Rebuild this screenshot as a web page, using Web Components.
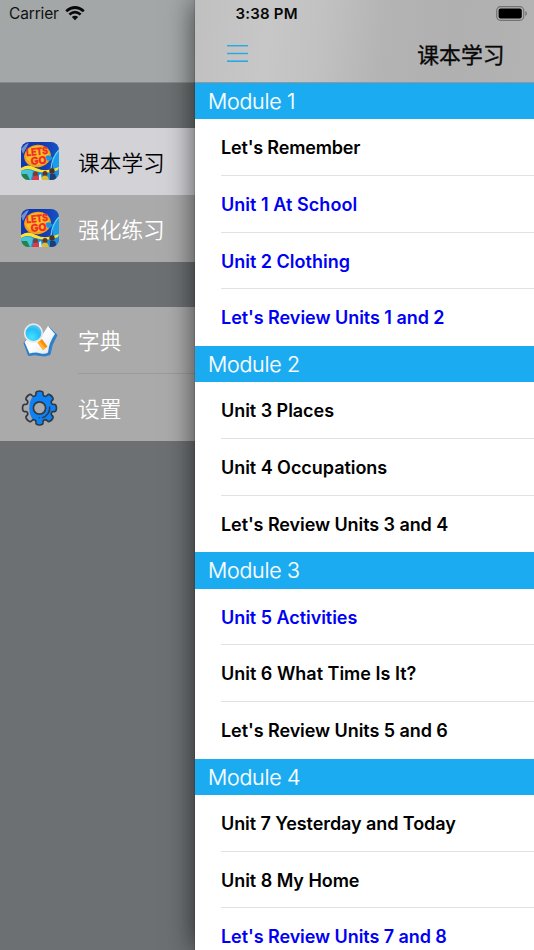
<!DOCTYPE html>
<html lang="zh-CN">
<head>
<meta charset="utf-8">
<title>课本学习</title>
<style>
    body {
        margin: 0;
        height: 950px;
        overflow: hidden;
        font-family: Inter, "Noto Sans CJK SC", sans-serif;
    }
</style>
</head>
<body>
<study-app>
    <side-menu slot="menu">
        <menu-group>
            <menu-item icon="book" selected>课本学习</menu-item>
            <menu-item icon="book">强化练习</menu-item>
        </menu-group>
        <menu-group>
            <menu-item icon="dictionary">字典</menu-item>
            <menu-item icon="settings">设置</menu-item>
        </menu-group>
    </side-menu>
    <nav-header slot="page" time="3:38 PM">课本学习</nav-header>
    <lesson-section slot="page" title="Module 1">
        <lesson-row style="letter-spacing: -0.17px">Let's Remember</lesson-row>
        <lesson-row done style="letter-spacing: 0.05px">Unit 1 At School</lesson-row>
        <lesson-row done style="letter-spacing: 0">Unit 2 Clothing</lesson-row>
        <lesson-row done>Let's Review Units 1 and 2</lesson-row>
    </lesson-section>
    <lesson-section slot="page" title="Module 2">
        <lesson-row>Unit 3 Places</lesson-row>
        <lesson-row>Unit 4 Occupations</lesson-row>
        <lesson-row style="letter-spacing: -0.08px">Let's Review Units 3 and 4</lesson-row>
    </lesson-section>
    <lesson-section slot="page" title="Module 3">
        <lesson-row done>Unit 5 Activities</lesson-row>
        <lesson-row style="letter-spacing: 0">Unit 6 What Time Is It?</lesson-row>
        <lesson-row style="letter-spacing: -0.07px">Let's Review Units 5 and 6</lesson-row>
    </lesson-section>
    <lesson-section slot="page" title="Module 4">
        <lesson-row style="letter-spacing: -0.08px">Unit 7 Yesterday and Today</lesson-row>
        <lesson-row>Unit 8 My Home</lesson-row>
        <lesson-row done style="letter-spacing: -0.07px">Let's Review Units 7 and 8</lesson-row>
    </lesson-section>
</study-app>

<script>
const ICONS = {
    book: `
        <svg width="38" height="38" viewBox="0 0 38 38">
            <defs>
                <clipPath id="r"><rect width="38" height="38" rx="8"/></clipPath>
                <linearGradient id="sky" x2="1"><stop offset=".5" stop-color="#1236ae"/><stop offset="1" stop-color="#1454c8"/></linearGradient>
            </defs>
            <g clip-path="url(#r)">
                <rect width="38" height="38" fill="url(#sky)"/>
                <path d="M0 7L5 2 8 1 2 12z" fill="#6d91ce"/>
                <path d="M38 8Q30 15 32 29H38z" fill="#189eea"/>
                <path d="M38 8Q31 15 30 27" fill="none" stroke="#6ed0e5" stroke-width="1.3"/>
                <ellipse cx="16.5" cy="14" rx="13.4" ry="11.2" fill="#f0a21d" transform="rotate(-8 17 14)"/>
                <ellipse cx="16.5" cy="13.5" rx="11.5" ry="9.5" fill="#fbbd2a"/>
                <path d="M25 14Q29 12 32 16L29 19 24 18z" fill="#1793df"/>
                <path d="M0 26Q7 22 14 26Q24 31 38 26V38H0z" fill="#178edf"/>
                <path d="M0 26Q7 21 15 26Q25 31 38 25L37 28Q27 33 14 29Q6 25 0 29z" fill="#ffe22e"/>
                <path d="M0 29Q6 26 12 29L10 38H0z" fill="#48c3db"/>
                <path d="M1 32H6L9 38H1z" fill="#278145"/>
                <circle cx="14.5" cy="32" r="2.5" fill="#853b29"/>
                <circle cx="24" cy="31.5" r="2.5" fill="#64341f"/>
                <circle cx="31" cy="29" r="2.7" fill="#4d3021"/>
                <path d="M12 35Q15 32 18 35V38H11z" fill="#df3944"/>
                <path d="M21 35Q24 32 27 35L28 38H21z" fill="#e0bd30"/>
                <path d="M29 32H34L36 38H29z" fill="#233b73"/>
                <path d="M18 33L20 32 21 38H18z" fill="#d8eae8"/>
                <g transform="rotate(-6 17 14)" fill="#f02c25" stroke="#f02c25" stroke-width=".3" font-family="Inter, sans-serif" font-weight="800" text-anchor="middle">
                    <text x="16.5" y="13" font-size="10" textLength="22" lengthAdjust="spacingAndGlyphs">LETS</text>
                    <text x="17" y="22.3" font-size="10.5" textLength="16" lengthAdjust="spacingAndGlyphs">GO</text>
                </g>
            </g>
        </svg>`,
    dictionary: `
        <svg width="38" height="38" viewBox="0 0 38 38">
            <defs>
                <radialGradient id="lens" cx=".4" cy=".75" r=".8"><stop stop-color="#42e4ff"/><stop offset=".6" stop-color="#26bcf6"/><stop offset="1" stop-color="#69cef5"/></radialGradient>
                <linearGradient id="page" x2="1" y2="1"><stop stop-color="#d8dddf"/><stop offset=".45" stop-color="#fff"/><stop offset="1" stop-color="#dce5ed"/></linearGradient>
            </defs>
            <path d="M3 22L7.5 34.5Q15 33 19 34.5Q24 36 29 33.5Q30 24 36 14L28 6 21 17 8 15z" fill="#2b7fcb" stroke="#2b7fcb" stroke-width="1" stroke-linejoin="round"/>
            <path d="M3.5 21L8.5 32.5Q15 30.5 19 32.3Q24 33.7 27 31.5Q28 21 34 13L27 5 20 16 9 15z" fill="url(#page)"/>
            <path d="M16.5 21.5L21 18 26.5 25.5 22 29z" fill="#fb8c0c"/>
            <path d="M16.5 21.5L18.5 20 24.5 27 22 29z" fill="#ffb52c"/>
            <circle cx="12.5" cy="12" r="8.8" fill="url(#lens)" stroke="#e8e7e6" stroke-width="1.7"/>
        </svg>`,
    settings: `
        <svg width="38" height="38" viewBox="-19 -19 38 38">
            <g transform="translate(-.5 0)">
                <path id="gear" fill="#aaa"/>
                <path id="fill" fill="#0c82f4"/>
                <path id="rim" fill="none" stroke="#303943" stroke-width="1.7" stroke-linejoin="round"/>
                <circle r="6.1" fill="#aaa" stroke="#303943" stroke-width="1.7"/>
                <path d="M10.2 -1A10.2 10.2 0 0 1 3 9.6" fill="none" stroke="#303943" stroke-width="1.5" stroke-linecap="round"/>
                <circle cx="-.2" cy="9.7" r=".8" fill="#303943"/>
            </g>
        </svg>`
};

// Eight rounded teeth around a hub
function gearPath() {
    let d = '';
    for (let i = 0; i < 8; i++) {
        const at = (r, deg) => {
            const a = (i * 45 + deg - 90) * Math.PI / 180;
            return `${(r * Math.cos(a)).toFixed(2)} ${(r * Math.sin(a)).toFixed(2)}`;
        };
        d += `${i ? 'L' : 'M'}${at(13, -19)}Q${at(13.3, -15)} ${at(14.6, -14)}Q${at(17.1, -13)} ${at(16.8, -5)}Q${at(17.3, 0)} ${at(16.8, 5)}Q${at(17.1, 13)} ${at(14.6, 14)}Q${at(13.3, 15)} ${at(13, 19)}`;
    }
    return d + 'Z';
}

customElements.define('study-app', class extends HTMLElement {
    constructor() {
        super();
        this.attachShadow({ mode: 'open' }).innerHTML = `
            <style>
                :host {
                    display: grid;
                    grid-template-columns: 195px 339px;
                    width: 534px;
                    height: 950px;
                    overflow: hidden;
                    background: #6c7072;
                }
                main {
                    height: 950px;
                    background: #fff;
                    box-shadow: 0 0 27px rgba(0, 0, 0, .65), 0 0 1px rgba(0, 0, 0, .5);
                    z-index: 1;
                }
            </style>
            <slot name="menu"></slot>
            <main><slot name="page"></slot></main>
        `;
    }
});

customElements.define('side-menu', class extends HTMLElement {
    constructor() {
        super();
        this.attachShadow({ mode: 'open' }).innerHTML = `
            <style>
                :host { display: block; min-width: 0; }
                header {
                    box-sizing: border-box;
                    height: 83px;
                    padding: 5px 0 0 9px;
                    display: flex;
                    align-items: flex-start;
                    gap: 6px;
                    background: #a3a7a7;
                    border-bottom: 1px solid #858989;
                    color: #111;
                    font-size: 15.5px;
                    letter-spacing: -.15px;
                    line-height: 18px;
                }
                svg { margin-top: 1px; }
                .groups {
                    display: flex;
                    flex-direction: column;
                    gap: 45px;
                    padding-top: 44.6px;
                }
            </style>
            <header>
                <span>Carrier</span>
                <svg width="20" height="15" viewBox="0 0 20 15">
                    <path d="M1.2 5.3Q10-2.3 18.8 5.3M4.4 8.5Q10 3.8 15.6 8.5" fill="none" stroke="#080808" stroke-width="2.7"/>
                    <path d="M6.8 11Q10 8.4 13.2 11L10 14.3z" fill="#080808"/>
                </svg>
            </header>
            <div class="groups"><slot></slot></div>
        `;
    }
});

customElements.define('menu-group', class extends HTMLElement {
    constructor() {
        super();
        this.attachShadow({ mode: 'open' }).innerHTML = `
            <style>
                :host { display: block; background: #aaa; }
            </style>
            <slot></slot>
        `;
    }
});

customElements.define('menu-item', class extends HTMLElement {
    constructor() {
        super();
        this.attachShadow({ mode: 'open' });
    }

    connectedCallback() {
        this.shadowRoot.innerHTML = `
            <style>
                :host {
                    display: flex;
                    box-sizing: border-box;
                    height: 67.15px;
                    padding-left: 21px;
                    gap: 19px;
                    color: #fff;
                    font: 350 21.7px "Noto Sans CJK SC", sans-serif;
                }
                :host([selected]) { background: #d3d2d7; color: #000; }
                svg { align-self: center; flex: none; }
                .label {
                    flex: 1;
                    display: flex;
                    align-items: center;
                }
                :host([icon="dictionary"]) .label { border-bottom: 1px solid #9b9b9b; }
            </style>
            ${ICONS[this.getAttribute('icon')]}
            <div class="label"><slot></slot></div>
        `;
        const rim = this.shadowRoot.querySelector('#rim');
        if (rim) {
            const d = gearPath();
            rim.setAttribute('d', d);
            this.shadowRoot.querySelector('#gear').setAttribute('d', d);
            const fill = this.shadowRoot.querySelector('#fill');
            fill.setAttribute('d', d);
            fill.style.clipPath = 'ellipse(15px 18px at 64% 50%)';
        }
    }
});

customElements.define('nav-header', class extends HTMLElement {
    constructor() {
        super();
        this.attachShadow({ mode: 'open' });
    }

    connectedCallback() {
        this.shadowRoot.innerHTML = `
            <style>
                :host {
                    display: block;
                    box-sizing: border-box;
                    height: 83px;
                    border-bottom: 1px solid #969696;
                    color: #080808;
                    background: linear-gradient(97deg, #bfc0bf 0%, #c7c7c7 22%, #c1c1c1 38%, #b4b4b4 55%, #b0b0b0 75%, #b3b3b3 100%);
                }
                .status {
                    display: flex;
                    justify-content: space-between;
                    height: 27px;
                    padding: 0 6px 0 40.5px;
                    align-items: center;
                    font-size: 15px;
                    font-weight: 600;
                    letter-spacing: .22px;
                }
                .status svg { margin-top: -1px; }
                .bar {
                    display: flex;
                    justify-content: space-between;
                    align-items: center;
                    height: 53px;
                    padding: 0 29.5px 0 32px;
                }
                h1 {
                    margin: 0;
                    font: 400 21.8px/30px "Noto Sans CJK SC", sans-serif;
                    -webkit-text-stroke: .35px #080808;
                }
            </style>
            <div class="status">
                <span>${this.getAttribute('time')}</span>
                <svg width="32" height="15" viewBox="0 0 32 15">
                    <rect x=".7" y=".7" width="27" height="13.6" rx="3.8" fill="none" stroke="#737373" stroke-width="1.2"/>
                    <rect x="2.6" y="2.6" width="23.2" height="9.8" rx="2" fill="#000"/>
                    <path d="M29.3 5V10Q31 9.3 31 7.5T29.3 5z" fill="#777"/>
                </svg>
            </div>
            <div class="bar">
                <svg width="21" height="19" viewBox="0 0 21 19" fill="#26a9e6">
                    <rect y="1" width="21" height="1.4"/>
                    <rect y="8.8" width="21" height="1.4"/>
                    <rect y="16.4" width="21" height="1.6"/>
                </svg>
                <h1><slot></slot></h1>
            </div>
        `;
    }
});

customElements.define('lesson-section', class extends HTMLElement {
    constructor() {
        super();
        this.attachShadow({ mode: 'open' });
    }

    connectedCallback() {
        this.shadowRoot.innerHTML = `
            <style>
                :host { display: block; }
                h2 {
                    margin: 0;
                    height: 36.1px;
                    padding-left: 13px;
                    background: #1babf1;
                    color: #fff;
                    font-size: 21.4px;
                    font-weight: 350;
                    letter-spacing: -.25px;
                    line-height: 37.4px;
                    -webkit-text-stroke: .2px #fff;
                }
            </style>
            <h2>${this.getAttribute('title')}</h2>
            <slot></slot>
        `;
    }
});

customElements.define('lesson-row', class extends HTMLElement {
    constructor() {
        super();
        this.attachShadow({ mode: 'open' }).innerHTML = `
            <style>
                :host {
                    display: block;
                    box-sizing: border-box;
                    height: 56.75px;
                    margin-left: 26px;
                    border-bottom: 1px solid #e2e2e4;
                    color: #000;
                    font-size: 18px;
                    font-weight: 600;
                    letter-spacing: -.04px;
                    line-height: 58.7px;
                    white-space: nowrap;
                }
                :host([done]) { color: #0000f5; }
                :host(:last-of-type) { border-bottom: 0; }
            </style>
            <slot></slot>
        `;
    }
});
</script>
</body>
</html>
